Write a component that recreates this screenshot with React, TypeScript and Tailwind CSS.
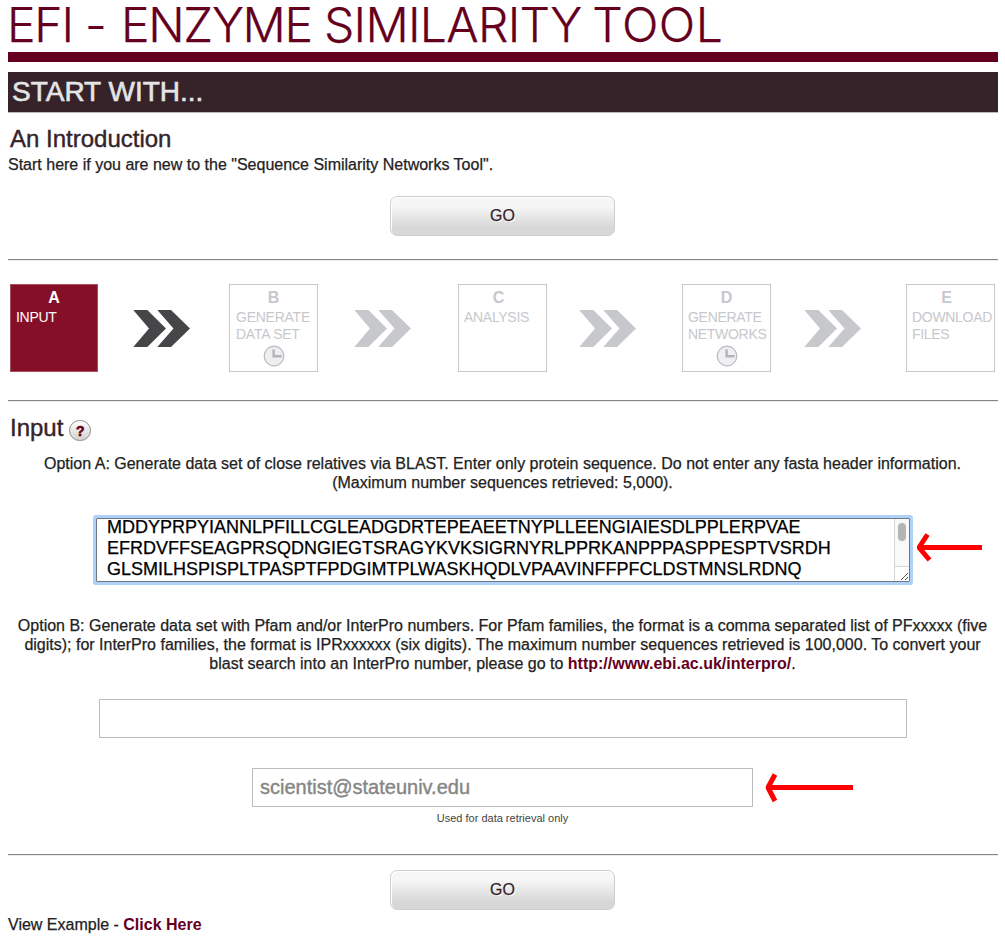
import type { ReactNode } from "react";

function Divider() {
  return <div className="ml-2 h-[2px] w-[990px] border-t border-b border-t-[#878787] border-b-[#ececec]" />;
}

function GoButton() {
  return (
    <button className="mx-auto block h-10 w-[225px] rounded-[7px] border border-[#cfcfcf] bg-linear-to-b from-[#f6f6f6] from-25% to-[#d7d7d7] to-80% text-base leading-none text-[#332229] shadow-[inset_1px_1px_0_#fff] [text-shadow:1px_1px_0_#fff]">
      GO
    </button>
  );
}

function Chevrons({ dark = false }: { dark?: boolean }) {
  return (
    <svg width="57" height="37" viewBox="0 0 57 37" className={dark ? "shrink-0 fill-[#464648]" : "shrink-0 fill-[#c7c8cc]"}>
      <path d="M0.3 0H14.3L33 18.5L14.3 37H0.3L16 18.5Z" />
      <path d="M24.3 0H38L57 18.5L38 37H24.3L40.5 18.5Z" />
    </svg>
  );
}

function Clock() {
  return (
    <svg width="22" height="22" viewBox="0 0 22 22" fill="none" className="absolute top-[60px] left-[33px]">
      <circle cx="11" cy="11" r="9.8" fill="#efeff1" stroke="#b9bac0" strokeWidth="1.2" />
      <path d="M10.6 4.5V11.2H18.6" stroke="#b3b4b9" strokeWidth="2.4" />
    </svg>
  );
}

type StepProps = { letter: string; lines: string[]; active?: boolean; clock?: boolean; shifted?: boolean; inset?: boolean };

function Step({ letter, lines, active, clock, shifted, inset }: StepProps) {
  return (
    <div
      className={
        active
          ? "relative h-[88px] w-[88px] shrink-0 border border-[#a4505f] bg-[#850f26] text-white [-webkit-text-stroke:0]"
          : "relative h-[88px] w-[89px] shrink-0 border border-[#c7c8cc] text-[#c7c8cc] [-webkit-text-stroke:0]"
      }
    >
      <div className={shifted ? "pt-[4px] pr-[8px] text-center text-base leading-[18px] font-bold" : "pt-[4px] text-center text-base leading-[18px] font-bold"}>
        {letter}
      </div>
      <div className={inset ? "pt-[2px] pl-[6px] text-[14px] leading-[17px] tracking-[-0.25px] whitespace-nowrap" : "pt-[2px] pl-[5px] text-[14px] leading-[17px] tracking-[-0.3px] whitespace-nowrap"}>
        {lines.map((l) => (
          <div key={l}>{l}</div>
        ))}
      </div>
      {clock && <Clock />}
    </div>
  );
}

function Link({ children }: { children: ReactNode }) {
  return <a className="font-bold text-[#64001d] [-webkit-text-stroke:0]">{children}</a>;
}

const sequence = [
  "MDDYPRPYIANNLPFILLCGLEADGDRTEPEAEETNYPLLEENGIAIESDLPPLERPVAE",
  "EFRDVFFSEAGPRSQDNGIEGTSRAGYKVKSIGRNYRLPPRKANPPPASPPESPTVSRDH",
  "GLSMILHSPISPLTPASPTFPDGIMTPLWASKHQDLVPAAVINFFPFCLDSTMNSLRDNQ",
];

export default function App() {
  return (
    <div className="h-[946px] w-[1005px] bg-white font-['Liberation_Sans',Arial,sans-serif] text-base text-[#222] [-webkit-text-stroke:0.25px]">
      <h1 className="h-[52px] pl-[7px] font-['Inter',sans-serif] text-[48px] leading-[50px] font-light tracking-[-1.2px] whitespace-nowrap text-[#64001d]">
        EFI - <span className="ml-[3px] tracking-[-1.3px]">ENZYME </span>
        <span className="tracking-[-0.7px]">SIMILARITY </span>
        <span className="-ml-[2px] tracking-[0.5px]">TOOL</span>
      </h1>
      <div className="ml-2 h-[10px] w-[990px] bg-[#64001d]" />
      <h2 className="mt-[10px] ml-2 h-[41px] w-[990px] border-b border-[#bdb9bb] bg-[#352329] pl-1 text-[28px] leading-10 text-[#e5e5e5] [-webkit-text-stroke:0.6px]">
        START WITH...
      </h2>
      <h3 className="mt-[11px] pl-[10px] text-2xl leading-[30px] text-[#352329] [-webkit-text-stroke:0.4px]">An Introduction</h3>
      <p className="mt-[1px] h-[41px] pl-2 leading-[19px]">
        Start here if you are new to the "Sequence Similarity Networks Tool".
      </p>
      <GoButton />
      <div className="h-[23px]" />
      <Divider />
      <div className="flex h-[139px] pt-[23px] pl-[10px]">
        <Step letter="A" lines={["INPUT"]} active />
        <div className="flex w-[131px] items-start pt-[26px] pl-[35px]"><Chevrons dark /></div>
        <Step letter="B" lines={["GENERATE", "DATA SET"]} clock inset />
        <div className="flex w-[140px] items-start pt-[26px] pl-[36px]"><Chevrons /></div>
        <Step letter="C" lines={["ANALYSIS"]} shifted />
        <div className="flex w-[135px] items-start pt-[26px] pl-[32px]"><Chevrons /></div>
        <Step letter="D" lines={["GENERATE", "NETWORKS"]} clock />
        <div className="flex w-[135px] items-start pt-[26px] pl-[33px]"><Chevrons /></div>
        <Step letter="E" lines={["DOWNLOAD", "FILES"]} shifted />
      </div>
      <Divider />
      <div className="flex h-[52px] pt-[11px] pl-[10px]">
        <h3 className="text-2xl leading-[30px] text-[#352329] [-webkit-text-stroke:0.4px]">Input</h3>
        <div className="mt-[7px] ml-[6px] flex h-[21px] w-[22px] items-center justify-center rounded-full border border-[#8b8b8b] bg-linear-to-b from-white to-[#d2d2d2] text-sm leading-none font-bold text-[#64001d] [-webkit-text-stroke:0.6px]">
          ?
        </div>
      </div>
      <p className="text-center leading-[19px]">
        Option A: Generate data set of close relatives via BLAST. Enter only protein sequence. Do not enter any fasta header information.
        <br />
        (Maximum number sequences retrieved: 5,000).
      </p>
      <div className="flex pt-[26px] pl-[96px]">
        <div className="flex h-[64px] w-[814px] rounded-[1px] border border-[#6f7780] shadow-[0_0_0_3px_#afd1f9]">
          <div className="h-[62px] flex-1 pl-[10px] text-[18px] leading-[21px] whitespace-nowrap text-black">
            <div className="-mt-[2px]">
              {sequence.map((s) => (
                <div key={s}>{s}</div>
              ))}
            </div>
          </div>
          <div className="flex w-[15px] flex-col border-l border-[#d6d6d6] bg-[#f9f9f9]">
            <div className="h-[48px] border-b border-[#d6d6d6] pt-1 pl-[3px]">
              <div className="h-[18px] w-2 rounded-full bg-[#b4b4b4]" />
            </div>
            <svg width="14" height="14" viewBox="0 0 14 14" stroke="#555" strokeWidth="1" className="bg-white">
              <path d="M6 13L13 6M10 13L13 10" />
            </svg>
          </div>
        </div>
        <svg width="68" height="30" viewBox="0 0 68 30" fill="none" stroke="#f00" strokeWidth="5" className="mt-[15px] ml-[5px]">
          <path d="M4 14.5H67M12.5 1.5L4 14.5L14.5 27" strokeLinejoin="bevel" />
        </svg>
      </div>
      <p className="mt-[34px] text-center leading-[19px]">
        Option B: Generate data set with Pfam and/or InterPro numbers. For Pfam families, the format is a comma separated list of PFxxxxx (five
        <br />
        digits); for InterPro families, the format is IPRxxxxxx (six digits). The maximum number sequences retrieved is 100,000. To convert your
        <br />
        blast search into an InterPro number, please go to <Link>http://www.ebi.ac.uk/interpro/</Link>.
      </p>
      <div className="mt-[26px] ml-[99px] h-[39px] w-[808px] border border-[#bcbcbc]" />
      <div className="mt-[30px] flex h-[39px] pl-[252px]">
        <div className="h-[39px] w-[501px] border border-[#bcbcbc] pl-[7px] text-xl leading-[37px] text-[#868686] [-webkit-text-stroke:0.4px]">
          scientist@stateuniv.edu
        </div>
        <svg width="90" height="30" viewBox="0 0 90 30" fill="none" stroke="#f00" strokeWidth="5" className="mt-[5px] ml-[11px]">
          <path d="M4 14.5H89M11 1.5L4 14.5L11 28" strokeLinejoin="bevel" />
        </svg>
      </div>
      <div className="h-[47px] pt-[4px] text-center text-[11px] leading-[15px] text-[#444] [-webkit-text-stroke:0]">Used for data retrieval only</div>
      <Divider />
      <div className="h-[14px]" />
      <GoButton />
      <p className="mt-[5px] pl-2 leading-[19px]">
        View Example - <Link>Click Here</Link>
      </p>
    </div>
  );
}
